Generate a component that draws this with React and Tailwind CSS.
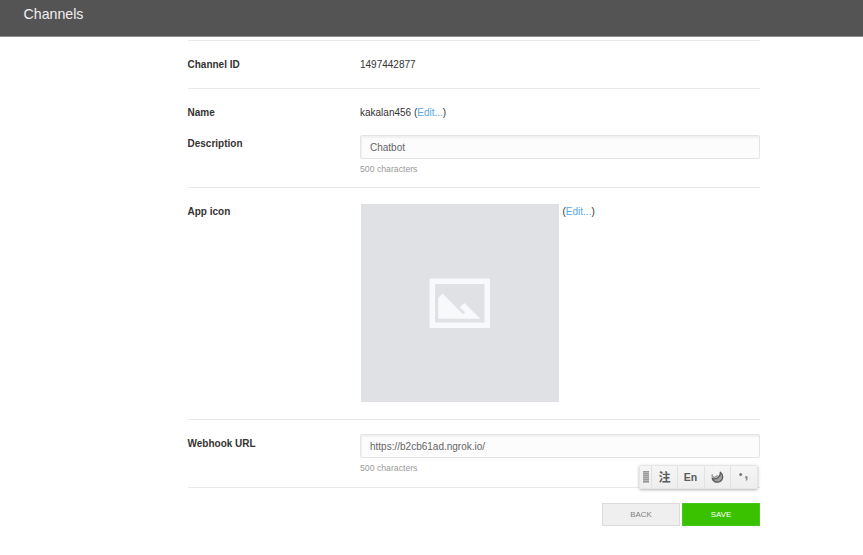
import React from 'react';

function Row({ label, className = '', children }) {
  return (
    <div className={`flex ${className}`}>
      <div className="w-[172.5px] shrink-0 font-bold">{label}</div>
      <div className="grow">{children}</div>
    </div>
  );
}

function Edit() {
  return (
    <span>
      (<a className="text-[#58a8e4]">Edit...</a>)
    </span>
  );
}

function Field({ value }) {
  return (
    <div>
      <div className="flex h-6 w-[400px] items-center rounded-[2px] border border-[#e2e4e5] bg-[#fcfcfc] pt-[2px] pl-[9px] text-[#666] shadow-[inset_1px_2px_2px_#f0f0f0]">
        {value}
      </div>
      <div className="mt-[4px] text-[8.7px] leading-3 text-[#999]">500 characters</div>
    </div>
  );
}

function Placeholder() {
  return (
    <div className="flex h-[198px] w-[198px] items-center justify-center bg-[#e0e1e5]">
      <svg width="62" height="50" viewBox="0 0 62 50">
        <path
          fill="#f8f9fb"
          fillRule="evenodd"
          d="M2 .5H59.500Q61 .5 61 2V48.500Q61 50 59.500 50H2Q.5 50 .5 48.500V2Q.5 .5 2 .5ZM6 6V44.500H55.500V6Z"
        />
        <path
          fill="#f8f9fb"
          d="M9.300 40.800V19.800L13.500 15.500L33 35.300Q35.500 36.500 36 34L30.800 29.500L35.300 25L51.500 40.800Z"
        />
      </svg>
    </div>
  );
}

function InputToolbar() {
  return (
    <div className="absolute top-[465px] left-[639px] flex h-6 w-[119px] rounded-[2px] border border-[#e6e6e6] bg-linear-to-b from-[#f5f5f5] to-[#eeeeee] text-[#5c5c5c] shadow-[0_1px_3px_rgba(0,0,0,0.3)]">
      <div className="flex w-3 items-center justify-center border-r border-[#e2e2e2]">
        <svg width="6" height="12" viewBox="0 0 6 12">
          <path d="M0 0H6V12H0Z" fill="#b8b8b8" />
          <path d="M0 .5H6M0 2.500H6M0 4.500H6M0 6.500H6M0 8.500H6M0 10.500H6" stroke="#999" />
        </svg>
      </div>
      <div className="flex w-[26px] items-center justify-center border-r border-[#e2e2e2] pb-px font-['Noto_Sans_CJK_TC',sans-serif] text-[12px] leading-none font-bold">
        注
      </div>
      <div className="flex w-[27px] items-center justify-center border-r border-[#e2e2e2] pr-px pb-px text-[10.5px] font-bold">
        En
      </div>
      <div className="flex w-[26px] items-center justify-center border-r border-[#e2e2e2] pb-px">
        <svg width="13" height="12" viewBox="0 0 13 12">
          <path
            fill="#a0a0a0"
            stroke="#5a5a5a"
            strokeWidth="1.300"
            strokeLinejoin="round"
            d="M9.300 1.200C13.200 4.200 12 10.900 6.800 11.200C4 11.300 1.900 9.700 1.200 7.200C3 8.300 5.200 8.100 7.100 6.500C8.900 5 9.600 3.200 9.300 1.200Z"
          />
          <path d="M1.200 3.200V5.500L3.600 6.500L6.800 4.500" fill="none" stroke="#8a8a8a" strokeWidth="1.200" />
        </svg>
      </div>
      <div className="flex grow items-center justify-center pb-px">
        <svg width="12" height="12" viewBox="0 0 12 12">
          <circle cx="2.700" cy="3.500" r="1.500" fill="#777" />
          <path d="M7.300 5.300H9.500V8.200L8.500 9.800H7.700L8.500 7.500H7.300Z" fill="#808080" />
        </svg>
      </div>
    </div>
  );
}

export default function App() {
  return (
    <div className="relative h-[555px] w-[863px] overflow-hidden bg-white font-['Liberation_Sans',Arial,sans-serif] text-[10px] leading-3 text-[#333]">
      <header className="h-[37px] border-b border-[#8c8c8c] bg-[#545454] pt-[5px] pl-[23.5px] text-[14.2px] leading-[18px] text-[#f0f0f0]">
        Channels
      </header>
      <main className="ml-[187.5px] w-[572.5px] pt-[3px]">
        <section className="h-12 border-t border-[#e9e9e9] pt-[18px]">
          <Row label="Channel ID">1497442877</Row>
        </section>
        <section className="h-[99px] border-t border-[#e9e9e9] pt-[18px]">
          <Row label="Name" className="h-7">
            kakalan456 <Edit />
          </Row>
          <div className="flex">
            <div className="w-[172.5px] shrink-0 pt-[3px] font-bold">Description</div>
            <Field value="Chatbot" />
          </div>
        </section>
        <section className="h-[232px] border-t border-[#e9e9e9] pt-4">
          <div className="flex">
            <div className="w-[173.5px] shrink-0 pt-[2px] font-bold">App icon</div>
            <Placeholder />
            <div className="pt-[2px] pl-[3.5px]">
              <Edit />
            </div>
          </div>
        </section>
        <section className="h-[68px] border-t border-[#e9e9e9] pt-[14px]">
          <div className="flex">
            <div className="w-[172.5px] shrink-0 pt-1 font-bold">Webhook URL</div>
            <Field value="https://b2cb61ad.ngrok.io/" />
          </div>
        </section>
        <section className="flex justify-end gap-[2px] border-t border-[#e9e9e9] pt-[15px] text-[7.9px]">
          <button className="h-[23px] w-[78px] border border-[#dcdcdc] bg-[#efefef] text-[#808080]">BACK</button>
          <button className="h-[23px] w-[78px] border border-[#48c81a] bg-[#3ac200] text-white">SAVE</button>
        </section>
      </main>
      <InputToolbar />
    </div>
  );
}
